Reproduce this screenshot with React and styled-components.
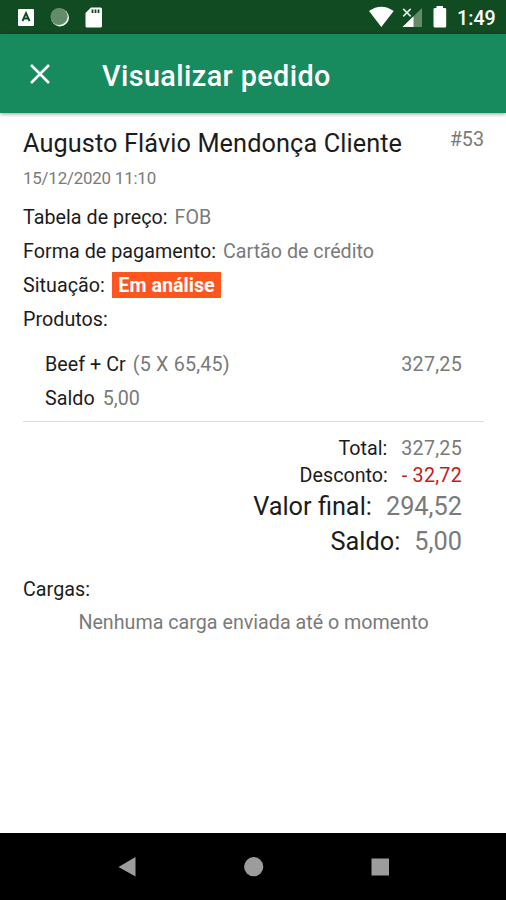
import styled, { createGlobalStyle } from "styled-components"

const GlobalStyle = createGlobalStyle`
  body {
    margin: 0;
    background-color: white;
    font-family: Roboto, sans-serif;
  }
`;

const customer = { name: 'Augusto Flávio Mendonça Cliente', order: '#53', date: '15/12/2020 11:10' };

const details = [
  {label: 'Tabela de preço:', value: 'FOB'},
  {label: 'Forma de pagamento:', value: 'Cartão de crédito'},
  {label: 'Situação:', status: 'Em análise'},
  {label: 'Produtos:'}
];

const products = [
  {item: 'Beef + Cr', quantity: '(5 X 65,45)', total: '327,25', balance: '5,00'}
];

const totals = [
  {label: 'Total:', value: '327,25'},
  {label: 'Desconto:', value: '- 32,72', negative: true},
  {label: 'Valor final:', value: '294,52', large: true},
  {label: 'Saldo:', value: '5,00', large: true}
];

const Screen = styled.div`
  display: flex;
  flex-flow: column nowrap;
  height: 900px;
  overflow: hidden;
  background-color: white;
`;

const StatusBar = styled.header`
  display: flex;
  justify-content: space-between;
  height: 34px;
  background-color: #114b22;
`;

const StatusIcons = styled.svg`
  display: block;
`;

const StatusRight = styled.div`
  display: flex;
`;

const Clock = styled.span`
  width: 49px;
  line-height: 37px;
  font-size: 19.7px;
  font-weight: 500;
  color: white;
`;

const AppBar = styled.nav`
  display: flex;
  align-items: center;
  flex-shrink: 0;
  height: 79px;
  padding-left: 29px;
  box-sizing: border-box;
  background-color: #178a5e;
  box-shadow: 0px 1px 4px rgba(0, 0, 0, 0.4);
`;

const CloseButton = styled.button`
  display: flex;
  width: 73px;
  padding: 0px;
  border: none;
  background: none;
`;

const Title = styled.h1`
  margin: 0px;
  padding-top: 4px;
  font-size: 28.8px;
  font-weight: 500;
  letter-spacing: 0.4px;
  color: white;
`;

const Content = styled.main`
  flex: 1;
  padding: 13px 22px 0px 23px;
`;

const CustomerRow = styled.section`
  display: flex;
  justify-content: space-between;
`;

const CustomerName = styled.h2`
  margin: 0px;
  line-height: 36px;
  font-size: 25.3px;
  font-weight: 400;
  letter-spacing: 0.09px;
  color: #1c1c1c;
`;

const OrderNumber = styled.span`
  line-height: 27px;
  font-size: 19.7px;
  color: #7a7a7a;
`;

const OrderDate = styled.time`
  display: block;
  margin-bottom: 5px;
  line-height: 33px;
  font-size: 16.9px;
  letter-spacing: -0.2px;
  color: #7a7a7a;
`;

const Line = styled.div`
  display: flex;
  align-items: center;
  height: 34px;
  font-size: 19.7px;
`;

const Label = styled.span`
  margin-right: 7px;
  letter-spacing: 0.04px;
  color: #1c1c1c;
`;

const Value = styled.span`
  color: ${props => props.$negative ? '#c31a1a' : '#7a7a7a'};
`;

const Quantity = styled(Value)`
  letter-spacing: 0.2px;
`;

const Balance = styled(Value)`
  margin-left: 1px;
`;

const Amount = styled(Value)`
  margin-left: auto;
  letter-spacing: 0.25px;
`;

const StatusBadge = styled.span`
  height: 26px;
  padding: 0px 6.5px;
  line-height: 28px;
  font-weight: 700;
  color: white;
  background-color: #ff5620;
`;

const ProductList = styled.section`
  margin-top: 11px;
  padding: 0px 22px 5.5px 22px;
  border-bottom: 1.5px solid #dcdcdc;
`;

const Totals = styled.section`
  padding: 13px 22px 13.5px 0px;
`;

const TotalLine = styled.div`
  display: flex;
  justify-content: flex-end;
  gap: 14px;
  line-height: ${props => props.$large ? '35px' : '27px'};
  font-size: ${props => props.$large ? '25.3px' : '19.7px'};
`;

const TotalLabel = styled.span`
  color: #1c1c1c;
`;

const TotalValue = styled(Value)`
  letter-spacing: ${props => props.$large ? '0px' : '0.25px'};
`;

const EmptyText = styled.p`
  margin: 0px;
  line-height: 34px;
  font-size: 19.7px;
  text-align: center;
  color: #7a7a7a;
`;

const NavigationBar = styled.footer`
  display: flex;
  justify-content: center;
  height: 67px;
  background-color: black;
`;

const NotificationIcons = () => (
  <StatusIcons width="120" height="34" viewBox="0 0 120 34">
    <rect x="18" y="9" width="16" height="17" rx="1" fill="white" />
    <path d="M22.5 21 L26 13 L29.5 21 M23.5 18.5 H28.5" fill="none" stroke="#114b22" strokeWidth="1.9" />
    <circle cx="60" cy="17.5" r="9" fill="#c5d4c8" />
    <path d="M68.5 15 A9.5 9.5 0 0 1 55.5 25.5 A11 11 0 0 0 68.5 15" fill="white" />
    <circle cx="59" cy="16.5" r="8.5" fill="#638c6b" />
    <path d="M91 7.5 H100.5 Q102 7.5 102 9 V26 Q102 27.5 100.5 27.5 H87 Q85.5 27.5 85.5 26 V13 Z" fill="white" />
    <path d="M92.5 9.5 V13 M95.5 9.5 V13 M98.5 9.5 V13" stroke="#114b22" strokeWidth="1.8" />
  </StatusIcons>
);

const SystemIcons = () => (
  <StatusIcons width="89" height="34" viewBox="368 0 89 34">
    <path d="M369 11 Q381.3 2.5 393.7 11 L381.3 27 Z" fill="white" />
    <path d="M422 8 V27 H402.5 Z" fill="#638c6b" />
    <path d="M413.5 16.3 V27 H402.5 Z" fill="white" />
    <path d="M403 8.7 L411 16.7 M411 8.7 L403 16.7" stroke="#114b22" strokeWidth="4" />
    <path d="M403.2 8.9 L410.7 16.4 M410.7 8.9 L403.2 16.4" stroke="#dce5de" strokeWidth="1.7" />
    <path d="M436.5 6 H443 V8 H445 Q446.2 8 446.2 9.3 V26 Q446.2 27.5 445 27.5 H435 Q433.5 27.5 433.5 26 V9.3 Q433.5 8 435 8 H436.5 Z" fill="white" />
  </StatusIcons>
);

const App = () => {
  return (
    <Screen>
      <GlobalStyle />
      <StatusBar>
        <NotificationIcons />
        <StatusRight>
          <SystemIcons />
          <Clock>1:49</Clock>
        </StatusRight>
      </StatusBar>
      <AppBar>
        <CloseButton aria-label="Fechar">
          <svg width="22" height="22" viewBox="0 0 22 22">
            <path d="M2 2 L20 20 M20 2 L2 20" stroke="white" strokeWidth="2.6" />
          </svg>
        </CloseButton>
        <Title>Visualizar pedido</Title>
      </AppBar>
      <Content>
        <CustomerRow>
          <CustomerName>{customer.name}</CustomerName>
          <OrderNumber>{customer.order}</OrderNumber>
        </CustomerRow>
        <OrderDate>{customer.date}</OrderDate>
        { details.map(({label,value,status}) => (
          <Line key={label}>
            <Label>{label}</Label>
            {value && <Value>{value}</Value>}
            {status && <StatusBadge>{status}</StatusBadge>}
          </Line>
        ))}
        <ProductList>
          { products.map(({item,quantity,total,balance}) => (
            <div key={item}>
              <Line>
                <Label>{item}</Label>
                <Quantity>{quantity}</Quantity>
                <Amount>{total}</Amount>
              </Line>
              <Line>
                <Label>Saldo</Label>
                <Balance>{balance}</Balance>
              </Line>
            </div>
          ))}
        </ProductList>
        <Totals>
          { totals.map(({label,value,large,negative}) => (
            <TotalLine key={label} $large={large}>
              <TotalLabel>{label}</TotalLabel>
              <TotalValue $large={large} $negative={negative}>{value}</TotalValue>
            </TotalLine>
          ))}
        </Totals>
        <Line>
          <Label>Cargas:</Label>
        </Line>
        <EmptyText>Nenhuma carga enviada até o momento</EmptyText>
      </Content>
      <NavigationBar>
        <svg width="280" height="67" viewBox="113 833 280 67">
          <path d="M118.5 867 L135.5 857 V876.5 Z" fill="#9c9c9c" />
          <circle cx="253.7" cy="866.7" r="9.6" fill="#9c9c9c" />
          <rect x="371.5" y="858.5" width="17.5" height="17" fill="#9c9c9c" />
        </svg>
      </NavigationBar>
    </Screen>
  )
}

export default App
